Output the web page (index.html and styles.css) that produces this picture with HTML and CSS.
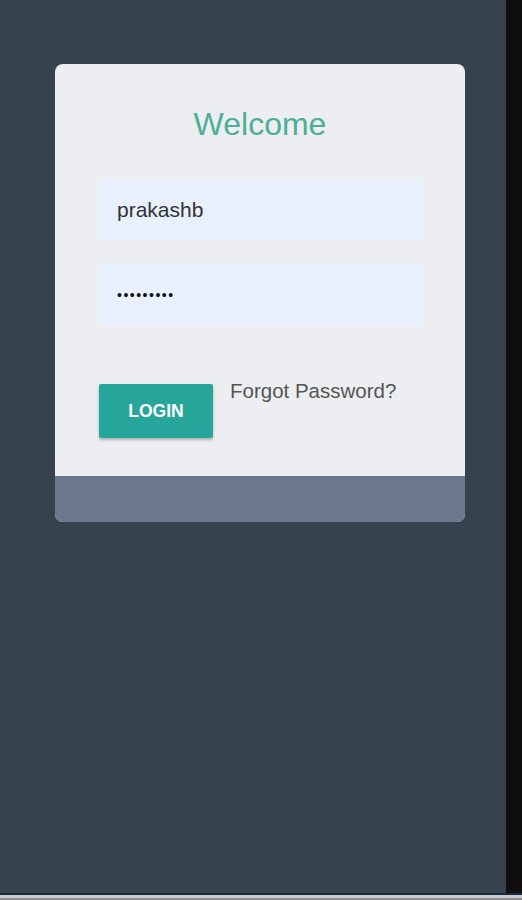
FILE: index.html
```html
<!DOCTYPE html>
<html>
<head>
<meta charset="utf-8">
<link rel="stylesheet" href="styles.css">
</head>
<body>
<div class="screen">
  <div class="main">
    <div class="card">
      <div class="card-body">
        <h1 class="title">Welcome</h1>
        <div class="field">prakashb</div>
        <div class="field pw">•••••••••</div>
        <div class="actions">
          <button class="btn">LOGIN</button>
          <a class="forgot">Forgot Password?</a>
        </div>
      </div>
      <div class="card-footer"></div>
    </div>
  </div>
  <div class="stripe"></div>
</div>
<div class="bottom-line"></div>
</body>
</html>
```
FILE: styles.css
```css
html, body { margin: 0; padding: 0; }
body {
  width: 522px; height: 900px; background: #37424f;
  font-family: "Liberation Sans", Arial, sans-serif;
  overflow: hidden;
}
.screen { display: flex; height: 893px; }
.main { width: 506px; background: #37424f; padding-top: 64px; box-sizing: border-box; }
.stripe { flex: 1; background: #100f0e; }
.bottom-line { height: 7px; background: linear-gradient(#1b2a44 0 2px, #c9cbcc 2px 5px, #8c8e90 5px); }
.card {
  margin-left: 55px; width: 410px; border-radius: 8px; overflow: hidden;
  background: #eceef1;
}
.card-body { padding: 43px 44px 38px 44px; }
.title {
  margin: 0 0 38px; text-align: center; font-weight: normal;
  font-size: 32px; line-height: 34px; color: #4eae98;
}
.field {
  height: 62px; background: #e8f0fe; box-sizing: border-box;
  padding: 0 18px; display: flex; align-items: center;
  font-size: 21px; color: #333; margin-bottom: 23px;
}
.field.pw { font-size: 14px; color: #111; letter-spacing: 1.5px; margin-bottom: 58px; }
.actions { display: flex; align-items: flex-start; gap: 17px; }
.btn {
  width: 114px; height: 54px; border: 0; border-radius: 2px;
  background: #26a69a; color: #fff; font-family: inherit; font-weight: bold;
  font-size: 17.5px; box-shadow: 0 2px 3px rgba(0,0,0,0.25);
}
.forgot { font-size: 20.5px; color: #555; line-height: 20px; margin-top: -3px; }
.card-footer { height: 46px; background: #6b788c; }
```
